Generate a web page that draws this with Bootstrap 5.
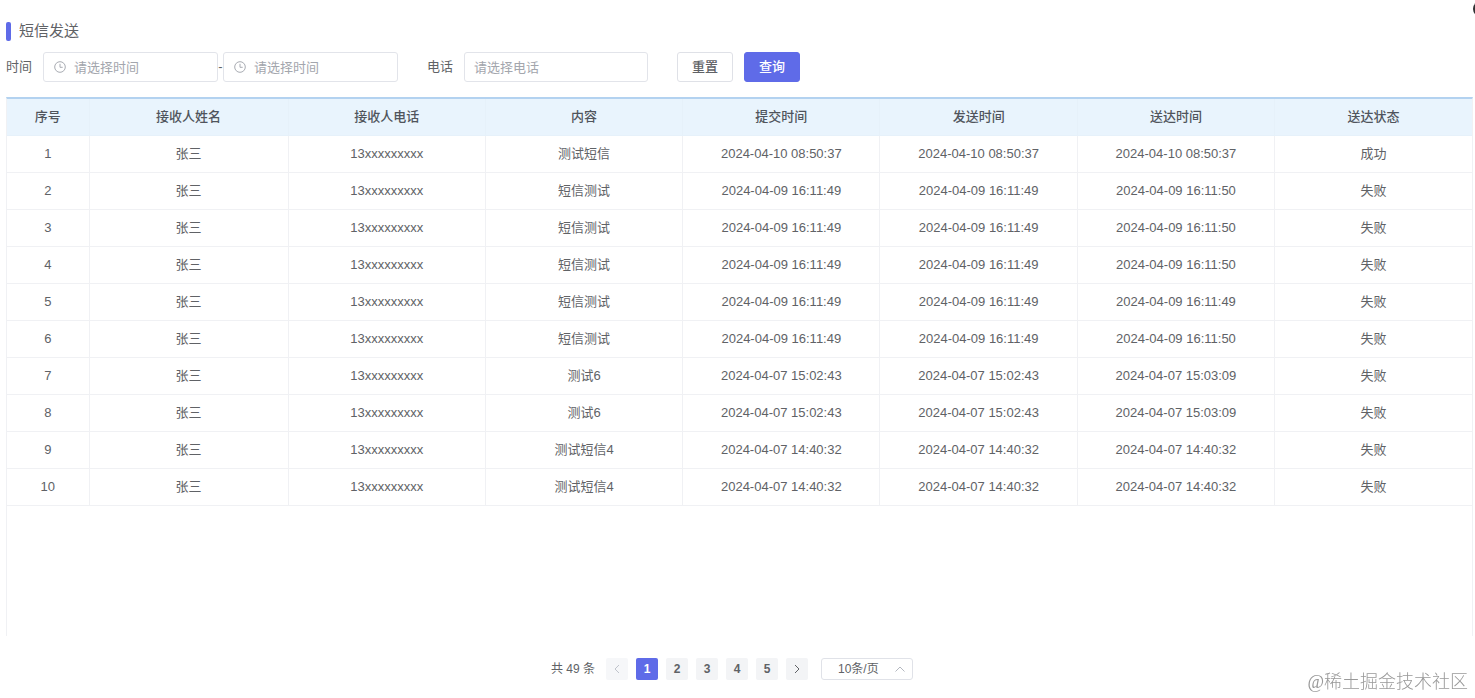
<!DOCTYPE html>
<html lang="zh-CN">
<head>
<meta charset="utf-8">
<meta name="viewport" content="width=device-width, initial-scale=1">
<title>短信发送</title>
<link href="https://cdn.jsdelivr.net/npm/bootstrap@5.3.0/dist/css/bootstrap.min.css" rel="stylesheet">
<style>
  body { font-family: "Liberation Sans", "Noto Sans CJK SC", sans-serif; font-size: 13px; line-height: 20px; color: #606266; overflow-x: hidden; }
  .page { padding: 21px 2px 0 6px; }
  .page-title { font-size: 15px; line-height: 20px; font-weight: 400; }
  .title-bar { width: 5px; height: 19px; border-radius: 2px; background: #5f6be8; margin-right: 8px; }
  .filters { margin-top: 11px; }
  .field { height: 30px; font-size: 13px; line-height: 20px; border-color: #e2e4ea; border-radius: 3px; color: #606266; padding: 4px 9px; }
  .field::placeholder { color: #a3a6ad; opacity: 1; }
  .field-label { margin-right: 11px; }
  .date-box { width: 175px; }
  .date-box .field { padding-left: 30px; }
  .date-box svg { position: absolute; left: 11px; top: 9px; pointer-events: none; }
  .date-dash { width: 5px; text-align: center; }
  .phone-label { margin-left: 29px; }
  .phone-box { width: 184px; }
  .btn-filter { width: 56px; height: 30px; padding: 0; font-size: 13px; font-weight: 500; border-radius: 3px; }
  .btn-reset { margin-left: 29px; color: #606266; border-color: #dfe1e7; background: #fff; }
  .btn-query, .btn-query:hover { margin-left: 11px; color: #fff; background: #5f6be8; border-color: #5f6be8; }
  .table-frame { margin-top: 15px; border: 1px solid #f0f1f4; border-top: 2px solid #b3d2f0; border-bottom: 0; }
  .sms-table { table-layout: fixed; --bs-table-color: #606266; color: #606266; text-align: center; }
  .sms-table th, .sms-table td { height: 37px; padding: 0 8px; vertical-align: middle; border: 0 solid #f0f1f4; border-width: 0 1px 1px 0; }
  .sms-table thead th { height: 36px; font-weight: 500; color: #50545c; background: #e9f4fd; border-color: #e6f1fa; }
  .sms-table th:last-child, .sms-table td:last-child { border-right: 0; }
  .col-index { width: 82px; }
  .col-name { width: 199px; }
  .pager { height: 62px; padding: 3px 15px 0 0; font-size: 12px; }
  .pager .pagination { gap: 8px; margin: 0 13px 0 11px; }
  .pager .page-item .page-link { width: 22px; height: 22px; padding: 0; display: flex; align-items: center; justify-content: center; border: 0; border-radius: 2px; margin: 0; background: #f3f4f6; color: #606266; font-size: 12px; font-weight: 700; }
  .pager .page-item.active .page-link { background: #5f6be8; color: #fff; }
  .pager .page-item.disabled .page-link { color: #c0c4cc; background: #f6f7f9; }
  .size-box { width: 92px; }
  .size-box .form-select { height: 22px; font-size: 12px; line-height: 20px; padding: 0 0 0 16px; border-color: #e0e2e8; border-radius: 3px; color: #606266; background-image: none; }
  .size-box svg { position: absolute; right: 7px; top: 6px; pointer-events: none; }
  .watermark { position: fixed; right: 7px; bottom: 4px; font: 300 18px/24px "Liberation Serif", "Noto Sans CJK SC Light", "Noto Sans CJK SC", serif; color: #999; }
  .edge-dot { position: fixed; right: -14px; top: 1px; width: 16px; height: 16px; border-radius: 50%; background: #303133; }
</style>
<script src="https://cdn.jsdelivr.net/npm/bootstrap@5.3.0/dist/js/bootstrap.bundle.min.js"></script>
</head>
<body>
<main class="page d-flex flex-column min-vh-100">
  <div class="d-flex align-items-center">
    <span class="title-bar"></span>
    <h1 class="page-title mb-0">短信发送</h1>
  </div>

  <form class="filters d-flex align-items-center">
    <label for="start" class="field-label">时间</label>
    <div class="date-box position-relative">
      <input id="start" class="form-control field" type="text" placeholder="请选择时间">
      <svg width="12" height="12" viewBox="0 0 12 12" fill="none" stroke="#a8abb2" aria-hidden="true"><circle cx="6" cy="6" r="5.3"/><path d="M6 2.8v3.5h2.7"/></svg>
    </div>
    <span class="date-dash">-</span>
    <div class="date-box position-relative">
      <input id="end" class="form-control field" type="text" placeholder="请选择时间" aria-label="结束时间">
      <svg width="12" height="12" viewBox="0 0 12 12" fill="none" stroke="#a8abb2" aria-hidden="true"><circle cx="6" cy="6" r="5.3"/><path d="M6 2.8v3.5h2.7"/></svg>
    </div>
    <label for="phone" class="phone-label field-label">电话</label>
    <div class="phone-box"><input id="phone" class="form-control field" type="text" placeholder="请选择电话"></div>
    <button type="reset" class="btn btn-filter btn-reset">重置</button>
    <button type="button" class="btn btn-filter btn-query">查询</button>
  </form>

  <div class="table-frame flex-grow-1">
    <table class="table sms-table mb-0">
      <colgroup><col class="col-index"><col class="col-name"><col><col><col><col><col><col></colgroup>
      <thead>
        <tr><th scope="col">序号</th><th scope="col">接收人姓名</th><th scope="col">接收人电话</th><th scope="col">内容</th><th scope="col">提交时间</th><th scope="col">发送时间</th><th scope="col">送达时间</th><th scope="col">送达状态</th></tr>
      </thead>
      <tbody>
        <tr><td>1</td><td>张三</td><td>13xxxxxxxxx</td><td>测试短信</td><td>2024-04-10 08:50:37</td><td>2024-04-10 08:50:37</td><td>2024-04-10 08:50:37</td><td>成功</td></tr>
        <tr><td>2</td><td>张三</td><td>13xxxxxxxxx</td><td>短信测试</td><td>2024-04-09 16:11:49</td><td>2024-04-09 16:11:49</td><td>2024-04-09 16:11:50</td><td>失败</td></tr>
        <tr><td>3</td><td>张三</td><td>13xxxxxxxxx</td><td>短信测试</td><td>2024-04-09 16:11:49</td><td>2024-04-09 16:11:49</td><td>2024-04-09 16:11:50</td><td>失败</td></tr>
        <tr><td>4</td><td>张三</td><td>13xxxxxxxxx</td><td>短信测试</td><td>2024-04-09 16:11:49</td><td>2024-04-09 16:11:49</td><td>2024-04-09 16:11:50</td><td>失败</td></tr>
        <tr><td>5</td><td>张三</td><td>13xxxxxxxxx</td><td>短信测试</td><td>2024-04-09 16:11:49</td><td>2024-04-09 16:11:49</td><td>2024-04-09 16:11:49</td><td>失败</td></tr>
        <tr><td>6</td><td>张三</td><td>13xxxxxxxxx</td><td>短信测试</td><td>2024-04-09 16:11:49</td><td>2024-04-09 16:11:49</td><td>2024-04-09 16:11:50</td><td>失败</td></tr>
        <tr><td>7</td><td>张三</td><td>13xxxxxxxxx</td><td>测试6</td><td>2024-04-07 15:02:43</td><td>2024-04-07 15:02:43</td><td>2024-04-07 15:03:09</td><td>失败</td></tr>
        <tr><td>8</td><td>张三</td><td>13xxxxxxxxx</td><td>测试6</td><td>2024-04-07 15:02:43</td><td>2024-04-07 15:02:43</td><td>2024-04-07 15:03:09</td><td>失败</td></tr>
        <tr><td>9</td><td>张三</td><td>13xxxxxxxxx</td><td>测试短信4</td><td>2024-04-07 14:40:32</td><td>2024-04-07 14:40:32</td><td>2024-04-07 14:40:32</td><td>失败</td></tr>
        <tr><td>10</td><td>张三</td><td>13xxxxxxxxx</td><td>测试短信4</td><td>2024-04-07 14:40:32</td><td>2024-04-07 14:40:32</td><td>2024-04-07 14:40:32</td><td>失败</td></tr>
      </tbody>
    </table>
  </div>

  <nav class="pager d-flex align-items-center justify-content-center" aria-label="分页">
    <span>共 49 条</span>
    <ul class="pagination">
      <li class="page-item disabled"><a class="page-link" href="#" aria-label="上一页"><svg width="8" height="10" viewBox="0 0 8 10" fill="none" stroke="currentColor"><path d="M6 1 2 5l4 4"/></svg></a></li>
      <li class="page-item active"><a class="page-link" href="#">1</a></li>
      <li class="page-item"><a class="page-link" href="#">2</a></li>
      <li class="page-item"><a class="page-link" href="#">3</a></li>
      <li class="page-item"><a class="page-link" href="#">4</a></li>
      <li class="page-item"><a class="page-link" href="#">5</a></li>
      <li class="page-item"><a class="page-link" href="#" aria-label="下一页"><svg width="8" height="10" viewBox="0 0 8 10" fill="none" stroke="currentColor"><path d="m2 1 4 4-4 4"/></svg></a></li>
    </ul>
    <div class="size-box position-relative">
      <select class="form-select" aria-label="每页条数"><option>10条/页</option></select>
      <svg width="12" height="10" viewBox="0 0 12 10" fill="none" stroke="#b4b8c0" aria-hidden="true"><path d="M1.5 7.5 6 3l4.500 4.500"/></svg>
    </div>
  </nav>
</main>
<span class="edge-dot"></span>
<div class="watermark">@稀土掘金技术社区</div>
</body>
</html>
